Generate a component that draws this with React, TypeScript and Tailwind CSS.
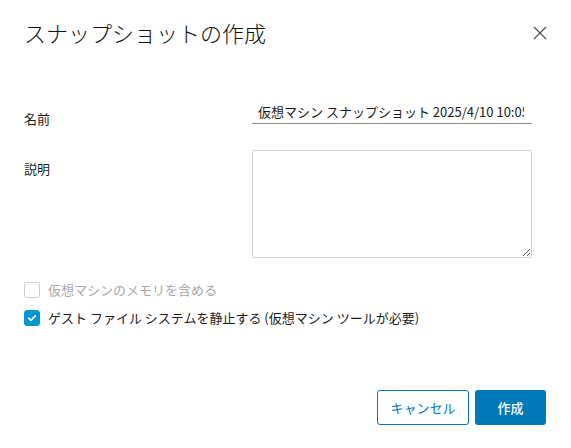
import { useState } from "react";

const font = { fontFamily: '"Noto Sans CJK JP", "Noto Sans", sans-serif' };

const CheckRow = ({
	label,
	checked,
	disabled,
	onChange,
}: {
	label: string;
	checked: boolean;
	disabled?: boolean;
	onChange?: () => void;
}) => (
	<label
		className={`flex h-5 items-center gap-[8px] text-[13px] ${
			disabled ? "text-[#a8a8a8]" : "text-[#1b1b1b] cursor-pointer"
		}`}>
		<button
			type="button"
			disabled={disabled}
			onClick={onChange}
			className={`flex h-[16px] w-[16px] items-center justify-center rounded-[3px] border ${
				checked ? "border-[#0095d3] bg-[#0095d3]" : "border-[#cccccc] bg-white"
			}`}>
			{checked && (
				<svg width="10" height="10" viewBox="0 0 10 10">
					<path d="M1.8 5.2 L4 7.3 L8.3 2.8" fill="none" stroke="white" strokeWidth="1.8" strokeLinecap="round" strokeLinejoin="round" />
				</svg>
			)}
		</button>
		<span>{label}</span>
	</label>
);

const App = () => {
	const [quiesce, setQuiesce] = useState(true);

	return (
		<div className="h-[448px] w-[571px] bg-white px-6 pt-[14px]" style={font}>
			<div className="flex h-9 items-center justify-between">
				<h2 className="text-[22px] leading-9 font-light text-[#111]">スナップショットの作成</h2>
				<button className="mt-[2px] flex h-[14px] w-[14px] items-center justify-center text-[#555]">
					<svg width="14" height="14" viewBox="0 0 14 14">
						<path d="M1 1 L13 13 M13 1 L1 13" stroke="currentColor" strokeWidth="1.3" fill="none" />
					</svg>
				</button>
			</div>

			<form className="mt-[50px]">
				<div className="flex items-start">
					<label className="mt-[9px] w-[228px] text-[13px] leading-5 text-[#1b1b1b]">名前</label>
					<input
						className="h-6 w-[280px] border-b border-[#8c8c8c] pl-[6px] pr-[8px] text-[13px] text-[#1b1b1b] outline-none"
						defaultValue="仮想マシン スナップショット 2025/4/10 10:05:12"
					/>
				</div>

				<div className="mt-[21px] flex items-start">
					<label className="mt-[9px] w-[228px] text-[13px] leading-5 text-[#1b1b1b]">説明</label>
					<textarea className="h-[108px] w-[280px] rounded-[3px] border border-[#cccccc] p-[6px] text-[13px] outline-none" />
				</div>

				<div className="mt-[22px] flex flex-col gap-2">
					<CheckRow label="仮想マシンのメモリを含める" checked={false} disabled />
					<CheckRow
						label="ゲスト ファイル システムを静止する (仮想マシン ツールが必要)"
						checked={quiesce}
						onChange={() => setQuiesce(!quiesce)}
					/>
				</div>

				<div className="mt-[62px] mr-px flex justify-end gap-[6px]">
					<button
						type="button"
						className="h-[35px] w-[92px] rounded-[3px] border border-[#0079b8] text-[13px] text-[#0079b8]">
						キャンセル
					</button>
					<button type="button" className="h-[35px] w-[71px] rounded-[3px] bg-[#0079b8] text-[13px] font-medium text-white">
						作成
					</button>
				</div>
			</form>
		</div>
	);
};

export default App;
